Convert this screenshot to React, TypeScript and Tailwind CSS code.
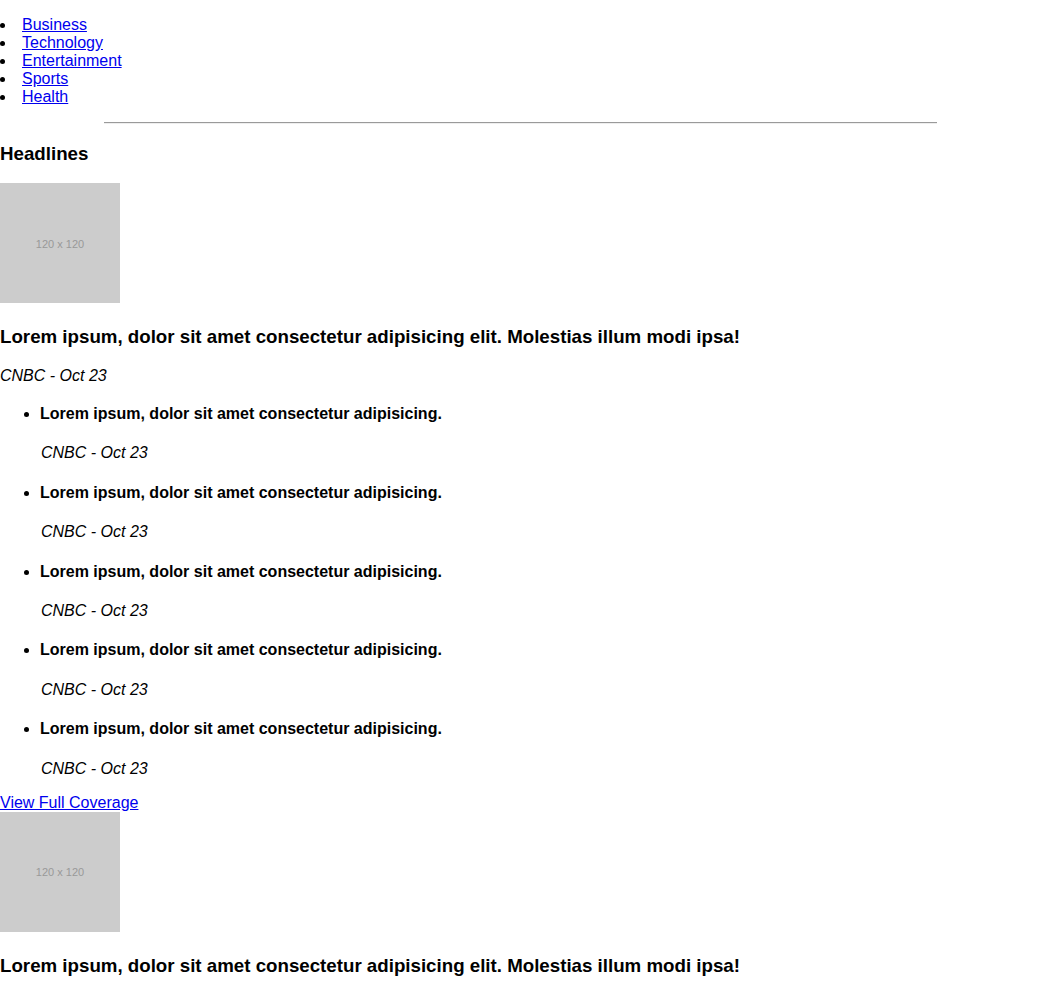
import React from 'react';

const categories = ['Business', 'Technology', 'Entertainment', 'Sports', 'Health'];

const related = [
  'Lorem ipsum, dolor sit amet consectetur adipisicing.',
  'Lorem ipsum, dolor sit amet consectetur adipisicing.',
  'Lorem ipsum, dolor sit amet consectetur adipisicing.',
  'Lorem ipsum, dolor sit amet consectetur adipisicing.',
  'Lorem ipsum, dolor sit amet consectetur adipisicing.',
];

const Placeholder: React.FC = () => (
  <div className="flex h-[120px] w-[120px] items-center justify-center bg-[#cccccc] pt-[2px] text-[11px] text-[#999999]">
    120 x 120
  </div>
);

const Story: React.FC = () => (
  <article>
    <div className="pb-[4px]">
      <Placeholder />
    </div>
    <h3 className="mt-[19px] text-[18.72px] font-bold leading-[normal]">
      Lorem ipsum, dolor sit amet consectetur adipisicing elit. Molestias illum modi ipsa!
    </h3>
    <p className="mt-[19px] italic leading-[18px]">CNBC - Oct 23</p>
    <ul className="mt-[20px] list-disc pl-10 leading-[18px]">
      {related.map((title, i) => (
        <li key={i} className={i > 0 ? 'mt-[21.4px]' : ''}>
          <h4 className="font-bold leading-[18px]">{title}</h4>
          <p className="mt-[21.4px] pl-px italic leading-[18px]">CNBC - Oct 23</p>
        </li>
      ))}
    </ul>
    <div className="mt-4 leading-[18px]">
      <a href="#" className="text-[#0000ee] underline">
        View Full Coverage
      </a>
    </div>
  </article>
);

export default function App() {
  return (
    <div className="bg-white text-base text-black" style={{ fontFamily: '"Liberation Sans", Arial, sans-serif' }}>
      <nav>
        <ul className="pt-4 leading-[18px]">
          {categories.map((c) => (
            <li key={c} className="flex items-center">
              <span className="mr-[17px] h-[5px] w-[5px] rounded-full bg-black" />
              <a href="#" className="text-[#0000ee] underline">
                {c}
              </a>
            </li>
          ))}
        </ul>
      </nav>
      <hr className="mx-auto mt-4 h-[2px] w-[833px] border-t border-b border-t-[#9a9a9a] border-b-[#eeeeee]" />
      <h3 className="mt-[19px] mb-[18px] text-[18.72px] font-bold leading-[normal]">Headlines</h3>
      <Story />
      <Story />
    </div>
  );
}
